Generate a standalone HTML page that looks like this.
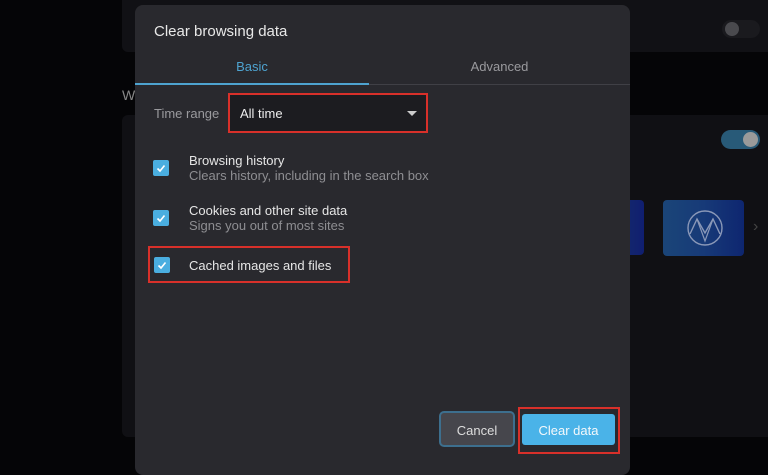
<!DOCTYPE html>
<html><head><style>
*{margin:0;padding:0;box-sizing:border-box}
body{width:768px;height:459px;overflow:hidden;background:#050507;font-family:"Liberation Sans",sans-serif;position:relative}
.a{position:absolute}
</style></head><body>
<div class="a" style="left:122px;top:-10px;width:660px;height:62px;background:#111115;border-radius:6px"></div>
<div class="a" style="left:722px;top:20px;width:38px;height:18px;border-radius:9px;background:#1a1a1e"></div>
<div class="a" style="left:725px;top:22px;width:14px;height:14px;border-radius:7px;background:#4a4a4e"></div>
<div class="a" style="left:122px;top:87px;color:#888;font-size:14px">W</div>
<div class="a" style="left:122px;top:115px;width:660px;height:322px;background:#101014;border-radius:6px"></div>
<div class="a" style="left:721px;top:130px;width:39px;height:19px;border-radius:10px;background:#285a78"></div>
<div class="a" style="left:743px;top:132px;width:15px;height:15px;border-radius:8px;background:#9a9a9a"></div>
<div class="a" style="left:610px;top:200px;width:34px;height:55px;border-radius:4px;background:linear-gradient(90deg,#16306a,#101e70)"></div>
<div class="a" style="left:663px;top:200px;width:81px;height:56px;border-radius:4px;background:linear-gradient(90deg,#1a4578,#173a78 50%,#0e2670)"></div>
<svg class="a" style="left:685px;top:207px" width="40" height="42" viewBox="0 0 40 42"><circle cx="20" cy="21" r="17" fill="none" stroke="#8a98b8" stroke-width="1.4"/><path d="M5 27 L12 12 L20 26 L28 12 L35 27" fill="none" stroke="#8a98b8" stroke-width="1.4"/><path d="M12 12 L20 34 L28 12" fill="none" stroke="#8a98b8" stroke-width="1.2"/></svg>
<div class="a" style="left:753px;top:218px;color:#444;font-size:16px">›</div>

<div class="a" style="left:135px;top:5px;width:495px;height:470px;background:#29292e;border-radius:8px"></div>
<div class="a" style="left:154px;top:23px;color:#e8e8e8;font-size:15px">Clear browsing data</div>
<div class="a" style="left:135px;top:59px;width:234px;text-align:center;color:#4ea3d0;font-size:13px">Basic</div>
<div class="a" style="left:369px;top:59px;width:261px;text-align:center;color:#9a9a9e;font-size:13px">Advanced</div>
<div class="a" style="left:135px;top:84px;width:495px;height:1px;background:#404046"></div>
<div class="a" style="left:135px;top:83px;width:234px;height:2px;background:#4ea3d0"></div>
<div class="a" style="left:154px;top:106px;color:#9a9a9e;font-size:13px">Time range</div>
<div class="a" style="left:228px;top:93px;width:200px;height:40px;border:2px solid #d8302a;background:#1c1c20"></div>
<div class="a" style="left:240px;top:106px;color:#eee;font-size:13px">All time</div>
<div class="a" style="left:407px;top:111px;width:0;height:0;border-left:5px solid transparent;border-right:5px solid transparent;border-top:5px solid #ccc"></div>

<div class="a" style="left:153px;top:160px;width:16px;height:16px;border-radius:2px;background:#4aaee0"></div>
<svg class="a" style="left:153px;top:160px" width="16" height="16"><path d="M4.5 8.5 L7 11 L11.5 5.5" fill="none" stroke="#fff" stroke-width="1.6"/></svg>
<div class="a" style="left:189px;top:153px;color:#e6e6e6;font-size:13px">Browsing history</div>
<div class="a" style="left:189px;top:168px;color:#8e8e92;font-size:13px">Clears history, including in the search box</div>

<div class="a" style="left:153px;top:210px;width:16px;height:16px;border-radius:2px;background:#4aaee0"></div>
<svg class="a" style="left:153px;top:210px" width="16" height="16"><path d="M4.5 8.5 L7 11 L11.5 5.5" fill="none" stroke="#fff" stroke-width="1.6"/></svg>
<div class="a" style="left:189px;top:203px;color:#e6e6e6;font-size:13px">Cookies and other site data</div>
<div class="a" style="left:189px;top:218px;color:#8e8e92;font-size:13px">Signs you out of most sites</div>

<div class="a" style="left:148px;top:246px;width:202px;height:37px;border:2px solid #d8302a"></div>
<div class="a" style="left:154px;top:257px;width:16px;height:16px;border-radius:2px;background:#4aaee0"></div>
<svg class="a" style="left:154px;top:257px" width="16" height="16"><path d="M4.5 8.5 L7 11 L11.5 5.5" fill="none" stroke="#fff" stroke-width="1.6"/></svg>
<div class="a" style="left:189px;top:258px;color:#e6e6e6;font-size:13px">Cached images and files</div>

<div class="a" style="left:439px;top:411px;width:76px;height:36px;border:2px solid #3d6f8e;border-radius:5px;background:#46464c"></div>
<div class="a" style="left:439px;top:423px;width:76px;text-align:center;color:#ddd;font-size:13px">Cancel</div>
<div class="a" style="left:518px;top:407px;width:102px;height:47px;border:2px solid #d8302a"></div>
<div class="a" style="left:522px;top:414px;width:93px;height:31px;border-radius:3px;background:#4ab3e8"></div>
<div class="a" style="left:522px;top:423px;width:93px;text-align:center;color:#f4f8fb;font-size:13px">Clear data</div>
</body></html>
